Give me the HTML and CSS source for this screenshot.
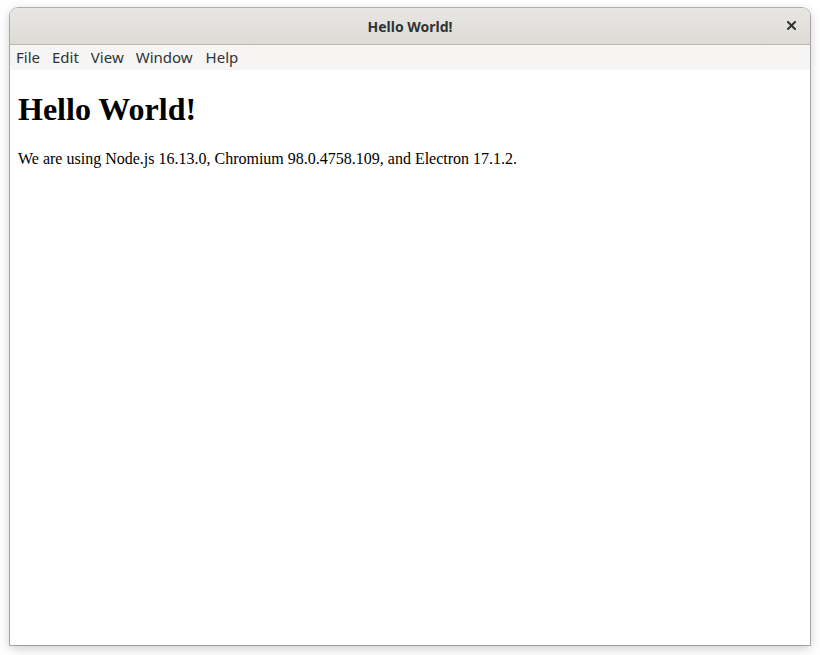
FILE: index.html
```html
<!DOCTYPE html>
<html>
<head>
<meta charset="utf-8">
<link rel="stylesheet" href="styles.css">
</head>
<body>
<div class="window">
  <div class="titlebar">
    <span class="title">Hello World!</span>
    <span class="close">
      <svg width="9" height="9" viewBox="0 0 9 9"><path d="M1 1L8 8M8 1L1 8" stroke="#2e3436" stroke-width="2" stroke-linecap="square"/></svg>
    </span>
  </div>
  <div class="menubar">
    <span class="menu-item">File</span>
    <span class="menu-item">Edit</span>
    <span class="menu-item">View</span>
    <span class="menu-item">Window</span>
    <span class="menu-item">Help</span>
  </div>
  <div class="content">
    <h1 class="heading">Hello World!</h1>
    <p class="info">We are using Node.js 16.13.0, Chromium 98.0.4758.109, and Electron 17.1.2.</p>
  </div>
</div>
</body>
</html>
```
FILE: styles.css
```css
html, body {
  margin: 0;
  padding: 0;
  width: 820px;
  height: 655px;
  overflow: hidden;
  background: #ffffff;
}
body {
  padding: 8px 10px 10px 10px;
  box-sizing: border-box;
}
.window {
  width: 800px;
  height: 637px;
  display: flex;
  flex-direction: column;
  border-radius: 8px 8px 0 0;
  box-shadow: 0 0 0 1px rgba(0,0,0,0.28), 0 3px 12px rgba(0,0,0,0.22);
  background: #ffffff;
  overflow: hidden;
}
.titlebar {
  height: 36px;
  flex: none;
  background: linear-gradient(#e8e6e3, #dedbd7);
  border-bottom: 1px solid #bfb8b1;
  position: relative;
  display: flex;
  align-items: center;
  justify-content: center;
}
.title {
  font-family: "Noto Sans", "Open Sans", sans-serif;
  font-weight: bold;
  font-size: 14px;
  color: #2e3436;
}
.close {
  position: absolute;
  right: 14px;
  top: 13px;
  width: 9px;
  height: 9px;
  display: flex;
}
.menubar {
  height: 25px;
  flex: none;
  background: #f6f5f4;
  display: flex;
  align-items: center;
  padding-left: 6px;
  font-family: "Noto Sans", "Open Sans", sans-serif;
  font-size: 15px;
  color: #2e3436;
}
.menu-item {
  padding: 0 6px 0 0;
  margin-right: 6px;
  line-height: 25px;
}
.menu-item:last-child {
  margin-left: 1px;
}
.content {
  flex: 1;
  padding: 0 8px;
  font-family: "Liberation Serif", "Times New Roman", serif;
  color: #000;
  overflow: hidden;
}
.heading {
  font-size: 32px;
  font-weight: bold;
  margin: 21px 0 22px 0;
  line-height: 37px;
}
.info {
  font-size: 16px;
  margin: 0;
  line-height: 18px;
}
```
